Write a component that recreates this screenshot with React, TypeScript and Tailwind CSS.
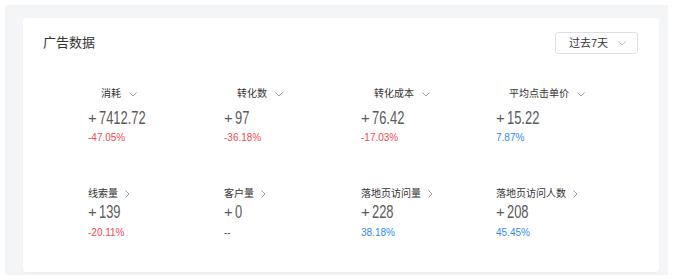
import React from "react";

type Metric = {
  label: string;
  value: string;
  pct: string;
  tone: "red" | "blue" | "none";
};

const topRow: Metric[] = [
  { label: "消耗", value: "7412.72", pct: "-47.05%", tone: "red" },
  { label: "转化数", value: "97", pct: "-36.18%", tone: "red" },
  { label: "转化成本", value: "76.42", pct: "-17.03%", tone: "red" },
  { label: "平均点击单价", value: "15.22", pct: "7.87%", tone: "blue" },
];

const bottomRow: Metric[] = [
  { label: "线索量", value: "139", pct: "-20.11%", tone: "red" },
  { label: "客户量", value: "0", pct: "--", tone: "none" },
  { label: "落地页访问量", value: "228", pct: "38.18%", tone: "blue" },
  { label: "落地页访问人数", value: "208", pct: "45.45%", tone: "blue" },
];

const cjk = "font-['Liberation_Sans','Noto_Sans_CJK_SC',sans-serif]";

function ChevronDown({ className = "" }: { className?: string }) {
  return (
    <svg width="8" height="5" viewBox="0 0 8 5" className={className} fill="none">
      <path d="M0.5 0.5L4 4L7.5 0.5" stroke="currentColor" strokeWidth="1" />
    </svg>
  );
}

function ChevronRight({ className = "" }: { className?: string }) {
  return (
    <svg width="5" height="8" viewBox="0 0 5 8" className={className} fill="none">
      <path d="M0.5 0.5L4 4L0.5 7.5" stroke="currentColor" strokeWidth="1" />
    </svg>
  );
}

function MetricCell({ m, top }: { m: Metric; top: boolean }) {
  const pctColor =
    m.tone === "red" ? "text-[#f5484f]" : m.tone === "blue" ? "text-[#2d8cf0]" : "text-[#444]";
  return (
    <div className="flex flex-col">
      <div
        className={`flex items-center h-[14px] text-[10px] leading-[14px] text-[#333] ${
          top ? "pl-[13px]" : ""
        }`}
      >
        <span>{m.label}</span>
        {top ? (
          <ChevronDown className="ml-[8px] text-[#999]" />
        ) : (
          <ChevronRight className="ml-[7px] text-[#999]" />
        )}
      </div>
      <div
        className={`flex items-center h-[22px] text-[#5a5a5a] whitespace-nowrap ${
          top ? "mt-[6px]" : "mt-0"
        }`}
      >
        <span className="text-[15px] mr-[2px] pt-[1px]">+</span>
        <span className="text-[19px] origin-left scale-x-[0.68]">{m.value}</span>
      </div>
      <div className={`text-[10px] leading-[14px] ${top ? "mt-[2px]" : "mt-[3px]"} ${pctColor}`}>
        {m.pct}
      </div>
    </div>
  );
}

export default function App() {
  return (
    <div className={`w-[678px] h-[280px] bg-white pt-[5px] pl-[5px] ${cjk}`}>
      <div className="w-[663px] h-[270px] bg-[#f4f5f7] pl-[18px] pt-[13px]">
        <div className="w-[636px] h-[254px] bg-white rounded-[4px] shadow-[0_1px_2px_rgba(0,0,0,0.04)]">
          <div className="flex items-center justify-between pl-[20px] pr-[21px] pt-[14px]">
            <span className="text-[13px] text-[#333]">广告数据</span>
            <div className="w-[83px] h-[22px] border border-[#dcdfe6] rounded-[3px] flex items-center justify-between pl-[13px] pr-[11px]">
              <span className="text-[11px] text-[#333]">过去7天</span>
              <ChevronDown className="text-[#bbb]" />
            </div>
          </div>
          <div className="pl-[65px] pt-[33px]">
            <div className="grid grid-cols-[136px_137px_135px_136px]">
              {topRow.map((m) => (
                <MetricCell key={m.label} m={m} top />
              ))}
            </div>
            <div className="grid grid-cols-[136px_137px_135px_136px] mt-[42px]">
              {bottomRow.map((m) => (
                <MetricCell key={m.label} m={m} top={false} />
              ))}
            </div>
          </div>
        </div>
      </div>
    </div>
  );
}
